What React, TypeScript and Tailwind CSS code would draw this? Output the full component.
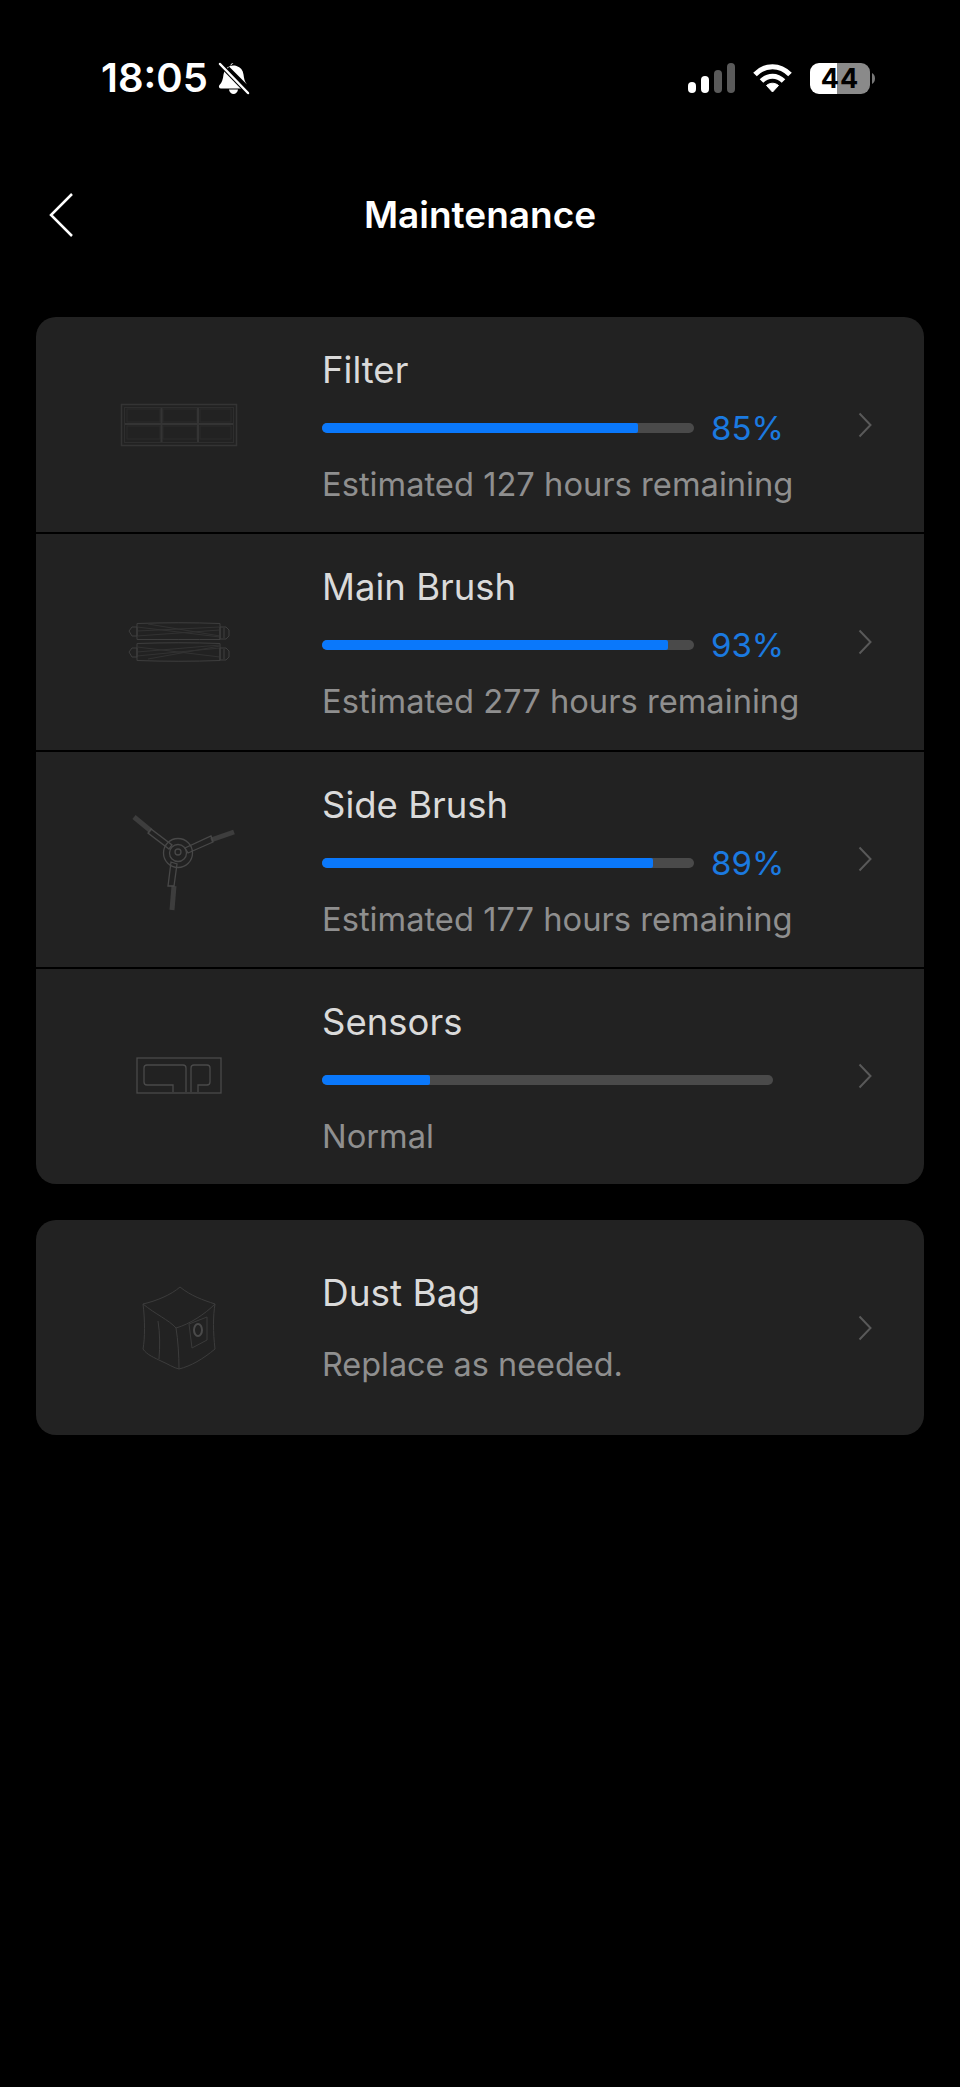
import React from "react";

const Filter = () => (
  <svg width="118" height="44" viewBox="0 0 118 44" fill="none" stroke="#343434" strokeWidth="1.5">
    <rect x="1.5" y="1.5" width="115" height="41" />
    <rect x="4.5" y="4.5" width="109" height="35" strokeWidth="1" stroke="#2e2e2e" />
    {[[7, 33], [43, 34], [80, 31]].map(([x, w]) => (
      <g key={x}>
        <rect x={x} y="6" width={w} height="13" strokeWidth="1" stroke="#2b2b2b" />
        <rect x={x} y="23" width={w} height="13" strokeWidth="1" stroke="#2b2b2b" />
      </g>
    ))}
    <path d="M5 21h108M41.500 5v34M78 5v34" strokeWidth="2" />
  </svg>
);

const MainBrush = () => (
  <svg width="102" height="42" viewBox="0 0 102 42" fill="none" stroke="#3e3e3e" strokeWidth="1">
    <path d="M9 2.500c28-1 56-1 83 0v16c-27 0-55 0-83 0zM9 22.500c28-1 56-1 83 0v17c-27 1-55 1-83 0z" />
    <path d="M9 6l83 10M9 10l83-4M9 15l83-6M20 3l72 12M9 35l83-8M9 26l83 10M9 31l83-7M20 38l72-13" stroke="#323232" />
    <path d="M9 6H4l-3 4 3 5h5zM9 27H4l-3 4 3 5h5zM92 6h6l3 3v6l-3 3h-6zM92 27h6l3 3v6l-3 3h-6z" />
    <path d="M96 7v10M96 28v10" />
  </svg>
);

const SideBrush = () => (
  <svg width="104" height="98" viewBox="0 0 104 98" fill="none" stroke="#484848" strokeWidth="1.300">
    <path d="M2 2l17 14" stroke="#3d3d3d" strokeWidth="5" />
    <path d="M79 25l23-8" stroke="#3d3d3d" strokeWidth="5" />
    <path d="M42 71l-2 24" stroke="#3d3d3d" strokeWidth="5" />
    <circle cx="46" cy="38" r="14.500" />
    <circle cx="46" cy="38" r="8.500" />
    <circle cx="46" cy="37" r="3" />
    <path d="M19 14l-3 4 21 16 3-4zM79 21l2 6-25 11-3-5zM39 47l6 2-3 22h-6z" />
  </svg>
);

const Sensor = () => (
  <svg width="86" height="38" viewBox="0 0 86 38" fill="none" stroke="#4a4a4a" strokeWidth="1.300">
    <rect x="1" y="1" width="84" height="35" />
    <path d="M37 35v-7H11q-3 0-3-3V11q0-3 3-3h36q3 0 3 3v24M55 35V11q0-3 3-3h13q3 0 3 3v14q0 3-3 3H62v7" />
  </svg>
);

const DustBag = () => (
  <svg width="76" height="84" viewBox="0 0 76 84" fill="none" stroke="#3c3c3c" strokeWidth="1">
    <path d="M39 1C30 9 15 15 2 18c2 15 2 35 0 45 4 6 12 9 18 12 7 3 13 7 18 8 12-3 24-10 36-20-2-17-2-33 0-45C62 14 50 10 39 1z" />
    <path d="M2 18c12 10 26 16 33 24 14-4 29-14 39-24M35 42c2 12 3 28 3 41M17 35c2 12 2 26 1 38" />
    <path d="M48 38l18-7v23l-15 8z" stroke="#3a3a3a" />
    <ellipse cx="57" cy="44" rx="4" ry="6" stroke="#4a4a4a" strokeWidth="2" />
  </svg>
);

const Chevron = () => (
  <svg className="shrink-0" width="14" height="26" viewBox="0 0 14 26" fill="none" stroke="#595959" strokeWidth="2">
    <path d="M1.500 1.500L12.500 13L1.500 24.500" />
  </svg>
);

const Track = ({ value, width }: { value: number; width: string }) => (
  <div className={`h-[10px] ${width} shrink-0 overflow-hidden rounded-full bg-[#4a4a4a]`}>
    <div className="h-full rounded-r-[2px] bg-[#0a78fb]" style={{ width: `${value}%` }} />
  </div>
);

const rows = [
  { title: "Filter", value: 85, sub: "Estimated 127 hours remaining", icon: <Filter /> },
  { title: "Main Brush", value: 93, sub: "Estimated 277 hours remaining", icon: <MainBrush /> },
  {
    title: "Side Brush",
    value: 89,
    sub: "Estimated 177 hours remaining",
    icon: (
      <div className="pl-[10px] pt-[10px]">
        <SideBrush />
      </div>
    ),
  },
];

const Row = ({ title, value, sub, icon }: { title: string; value?: number; sub: string; icon: React.ReactNode }) => (
  <div className="flex h-[215.25px] items-center bg-[#222222] pr-[52px]">
    <div className="flex w-[286px] shrink-0 items-center justify-center">{icon}</div>
    <div className="flex min-w-0 flex-1 flex-col pt-[3px]">
      <div className="text-[36.5px] leading-[44px] text-[#dadada]">{title}</div>
      <div className="mt-[16px] flex h-[40px] items-center">
        {value !== undefined ? (
          <>
            <Track value={value} width="w-[372px]" />
            <span className="ml-[17px] text-[33px] leading-[40px] text-[#1b7ae0]">{value}%</span>
          </>
        ) : (
          <Track value={24} width="w-[451px]" />
        )}
      </div>
      <div className="mt-[16px] text-[32.700px] leading-[40px] text-[#8f8f8f]">{sub}</div>
    </div>
    <Chevron />
  </div>
);

export default function App() {
  return (
    <div className="h-[2087px] w-[960px] overflow-hidden bg-black font-['Inter',sans-serif]">
      <div className="mt-[58px] flex h-[40px] items-center justify-between pl-[101px] pr-[85px]">
        <div className="flex items-center gap-[9px]">
          <span className="text-[40px] font-semibold leading-[40px] text-white">18:05</span>
          <svg width="33" height="33" viewBox="0 0 33 33" fill="white">
            <path d="M16.500 1c-1.800 0-3 1.200-3.300 3C9.500 5.200 7.200 8 6.500 12.500 6 17 5 20.500 2.500 23c-1.200 1.300-.5 3.500 1.500 3.500h20.500L8 8.500z" />
            <path d="M19.500 4c4 1.200 6.500 4 7 8.500.5 4 1 7 3.500 10L12 4.500c2-1 5-1.300 7.500-.5z" />
            <path d="M12 27.500h9c-.5 2.800-2.300 4.500-4.500 4.500S12.500 30.300 12 27.500z" />
            <path d="M3 2l28 29" stroke="black" strokeWidth="4.500" />
            <path d="M3 2l28 29" stroke="white" strokeWidth="2.500" strokeLinecap="round" />
          </svg>
        </div>
        <div className="flex items-center gap-[18px]">
          <svg width="47" height="30" viewBox="0 0 47 30">
            <rect x="0" y="19" width="8" height="11" rx="4" fill="white" />
            <rect x="13" y="13" width="8" height="17" rx="4" fill="white" />
            <rect x="26" y="7" width="8" height="23" rx="4" fill="#5a5a5a" />
            <rect x="39" y="0" width="8" height="30" rx="4" fill="#5a5a5a" />
          </svg>
          <svg width="39" height="30" viewBox="0 0 39 30" fill="none" stroke="white" strokeWidth="5">
            <path d="M2 11.500C12 1 27 1 37 11.500" />
            <path d="M8.500 18C15 11.500 24 11.500 30.500 18" />
            <path d="M13.500 22.500c3.500-3 8.500-3 12 0L19.500 29z" fill="white" strokeWidth="1" />
          </svg>
          <div className="flex items-center gap-[2px]">
            <div className="flex h-[31px] w-[60px] items-center justify-center rounded-[9px] bg-[linear-gradient(90deg,#ffffff_45%,#8a8a8a_45%)] text-[27px] font-bold leading-none tracking-[1px] text-black">
              44
            </div>
            <svg width="3" height="11" viewBox="0 0 3 11"><path d="M0 0c2 1 3 3 3 5.500S2 10 0 11z" fill="#777777" /></svg>
          </div>
        </div>
      </div>

      <div className="mt-[87px] grid h-[60px] grid-cols-[1fr_auto_1fr] items-center pl-[49px]">
        <svg width="24" height="46" viewBox="0 0 24 46" fill="none" stroke="white" strokeWidth="2.500">
          <path d="M23 2L2 23L23 44" />
        </svg>
        <h1 className="mr-[49px] text-[37px] font-semibold leading-[60px] text-white">Maintenance</h1>
        <div />
      </div>

      <div className="mx-[36px] mt-[72px] flex flex-col gap-[2px] overflow-hidden rounded-[20px]">
        {rows.map((r) => (
          <Row key={r.title} title={r.title} value={r.value} sub={r.sub} icon={r.icon} />
        ))}
        <Row title="Sensors" sub="Normal" icon={<Sensor />} />
      </div>

      <div className="mx-[36px] mt-[36px] flex h-[215px] items-center rounded-[20px] bg-[#222222] pr-[52px]">
        <div className="flex w-[286px] shrink-0 items-center justify-center"><DustBag /></div>
        <div className="flex min-w-0 flex-1 flex-col">
          <div className="text-[37px] leading-[44px] text-[#dadada]">Dust Bag</div>
          <div className="mt-[30px] text-[32.400px] leading-[40px] text-[#8f8f8f]">Replace as needed.</div>
        </div>
        <Chevron />
      </div>
    </div>
  );
}
